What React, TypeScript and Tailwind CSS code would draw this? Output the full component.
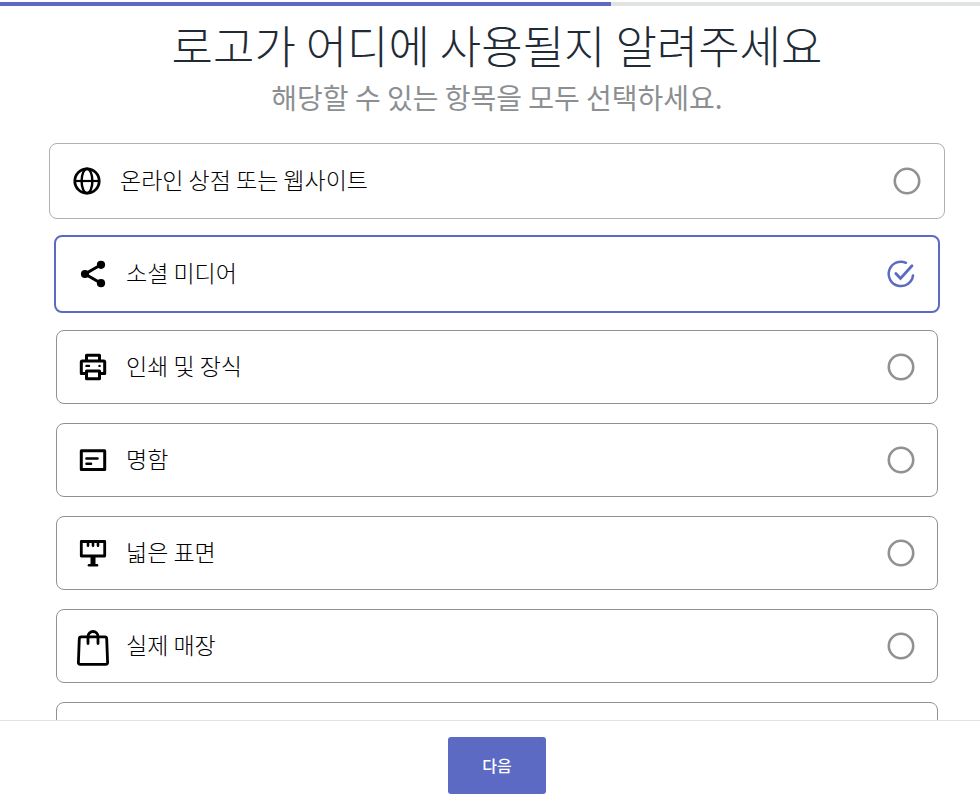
import React, { useState } from 'react';
import type { ReactNode } from 'react';
import clsx from 'clsx';

const PROGRESS = 62.35;

function GlobeIcon() {
    return (
        <svg viewBox="0 0 28 28" className="size-7" fill="none" stroke="currentColor" strokeWidth="2.8">
            <circle cx="14" cy="14" r="12.2" />
            <ellipse cx="14" cy="14" rx="5.4" ry="12.2" strokeWidth="2.4" />
            <path d="M2 14h24" strokeWidth="2.2" />
        </svg>
    );
}

function ShareIcon() {
    return (
        <svg viewBox="0 0 28 28" className="size-7" fill="currentColor">
            <path d="M22 4.800 6 14l16 9.200" fill="none" stroke="currentColor" strokeWidth="3" />
            <circle cx="22" cy="4.800" r="4.100" />
            <circle cx="6" cy="14" r="4.100" />
            <circle cx="22" cy="23.200" r="4.100" />
        </svg>
    );
}

function PrinterIcon() {
    return (
        <svg viewBox="0 0 28 28" className="size-7" fill="none" stroke="currentColor" strokeWidth="3" strokeLinejoin="round" strokeLinecap="round">
            <path d="M7.500 7V2.300h13V7" />
            <path d="M7 20.500H2.300V9Q2.300 8 3.300 8h21.400Q25.700 8 25.700 9v11.500H21" />
            <path d="M7.500 18h13v7.700h-13z" />
            <path d="M7.500 12.900h2.500M20.500 12.900h.1" strokeWidth="2.400" />
        </svg>
    );
}

function CardIcon() {
    return (
        <svg viewBox="0 0 28 28" className="size-7" fill="none" stroke="currentColor" strokeWidth="3" strokeLinejoin="round">
            <path d="M2.300 4.700h23.400v18.800H2.300z" />
            <path d="M7.500 12.500h11M7.500 17.800h4.500" strokeWidth="2.600" strokeLinecap="round" />
        </svg>
    );
}

function BillboardIcon() {
    return (
        <svg viewBox="0 0 28 28" className="size-7" fill="none" stroke="currentColor" strokeWidth="2.8" strokeLinejoin="round" strokeLinecap="round">
            <path d="M2.300 2.500h23.400v14.500H2.300z" />
            <path d="M9 3v3.800M14 3v3.800M19 3v3.800" strokeWidth="2.600" />
            <path d="M14 17v9" strokeWidth="5" strokeLinecap="butt" />
            <path d="M10 26.200h8" strokeWidth="2.600" />
        </svg>
    );
}

function BagIcon() {
    return (
        <svg viewBox="0 0 34 40" className="h-10 w-[34px] shrink-0" fill="none" stroke="currentColor" strokeWidth="2.8" strokeLinejoin="round" strokeLinecap="round">
            <path d="M5.200 10.800h23.600Q30.600 10.800 30.700 12.600L31.600 36.500Q31.700 38.300 29.800 38.300H4.200Q2.300 38.300 2.400 36.500L3.300 12.600Q3.400 10.800 5.200 10.800z" />
            <path d="M12 17.500V10.500a5 5 0 0 1 10 0V17.500" />
        </svg>
    );
}

function VehicleIcon() {
    return (
        <svg viewBox="0 0 28 28" className="size-7" fill="none" stroke="currentColor" strokeWidth="2.6" strokeLinejoin="round">
            <path d="M2 6h15v14H2zM17 11h5l4 4v5h-9" />
            <circle cx="8" cy="21" r="2.500" />
            <circle cx="21" cy="21" r="2.500" />
        </svg>
    );
}

function CheckMark({ checked }: { checked: boolean }) {
    if (!checked) {
        return (
            <svg viewBox="0 0 28 28" className="size-7 text-[#919191]" fill="none" stroke="currentColor" strokeWidth="2.6">
                <circle cx="14" cy="14" r="12.2" />
            </svg>
        );
    }
    return (
        <svg viewBox="0 0 28 28" className="size-7 text-[#5c6ac4]" fill="none" stroke="currentColor" strokeWidth="2.5" strokeLinecap="round">
            <path d="M19 2.800A12.200 12.200 0 1 0 26 15.500" />
            <path d="m8.800 13.500 4.700 5L25 5.800" strokeWidth="2.800" />
        </svg>
    );
}

type Option = { id: string; label?: string; icon: ReactNode };

const OPTIONS: Option[] = [
    { id: 'online', label: '온라인 상점 또는 웹사이트', icon: <GlobeIcon /> },
    { id: 'social', label: '소셜 미디어', icon: <ShareIcon /> },
    { id: 'print', label: '인쇄 및 장식', icon: <PrinterIcon /> },
    { id: 'card', label: '명함', icon: <CardIcon /> },
    { id: 'surface', label: '넓은 표면', icon: <BillboardIcon /> },
    { id: 'store', label: '실제 매장', icon: <BagIcon /> },
    { id: 'vehicle', icon: <VehicleIcon /> },
];

function App() {
    const [selected, setSelected] = useState<string[]>(['social']);
    const [active, setActive] = useState('online');

    const toggle = (id: string) => {
        setSelected((prev) => (prev.includes(id) ? prev.filter((item) => item !== id) : [...prev, id]));
    };

    return (
        <div className="flex h-screen flex-col bg-white pt-0.5 font-['Noto_Sans_CJK_KR',sans-serif]">
            {/* Progress */}
            <div className="h-1 shrink-0 bg-[#dfe3e4]">
                <div className="h-full bg-[#5c6ac4]" style={{ width: `${PROGRESS}%` }} />
            </div>

            <main className="min-h-0 flex-1 overflow-y-auto pr-[42px] pl-14 [scrollbar-width:none]">
                <header className="pt-[7px] text-center">
                    <h1 className="text-[45px] leading-[64px] font-light text-[#212b36]">로고가 어디에 사용될지 알려주세요</h1>
                    <p className="text-[28px] leading-10 font-normal text-[#8c8f92]">해당할 수 있는 항목을 모두 선택하세요.</p>
                </header>

                {/* Options */}
                <div className="flex flex-col gap-[19px] pt-[27px] pb-5">
                    {OPTIONS.map((option) => {
                        const checked = selected.includes(option.id);
                        return (
                            <label
                                key={option.id}
                                onMouseEnter={() => setActive(option.id)}
                                className={clsx(
                                    'relative flex cursor-pointer items-center rounded-lg border',
                                    checked && '-mx-0.5 -my-0.5 h-[78px] border-2 border-[#5c6ac4] px-[23px]',
                                    !checked && active === option.id && '-mx-[7px] -my-px h-[76px] border-[#b0b0b0] px-[23px]',
                                    !checked && active !== option.id && 'h-[74px] border-[#919191] px-[22px]',
                                )}
                            >
                                <input type="checkbox" className="sr-only" checked={checked} onChange={() => toggle(option.id)} />
                                <span className="flex w-7 shrink-0 justify-center text-black">{option.icon}</span>
                                <span className="flex-1 pb-1 pl-[19px] text-[23px] leading-8 font-light text-black">{option.label}</span>
                                <CheckMark checked={checked} />
                            </label>
                        );
                    })}
                </div>
            </main>

            <footer className="flex shrink-0 justify-center border-t border-[#dfe3e4] pt-4 pr-[42px] pb-[3px] pl-14">
                <button type="button" className="h-[57px] rounded-[3px] bg-[#5c6ac4] px-[34px] pb-0.5 text-base font-medium text-white">
                    다음
                </button>
            </footer>
        </div>
    );
}

export default App;
